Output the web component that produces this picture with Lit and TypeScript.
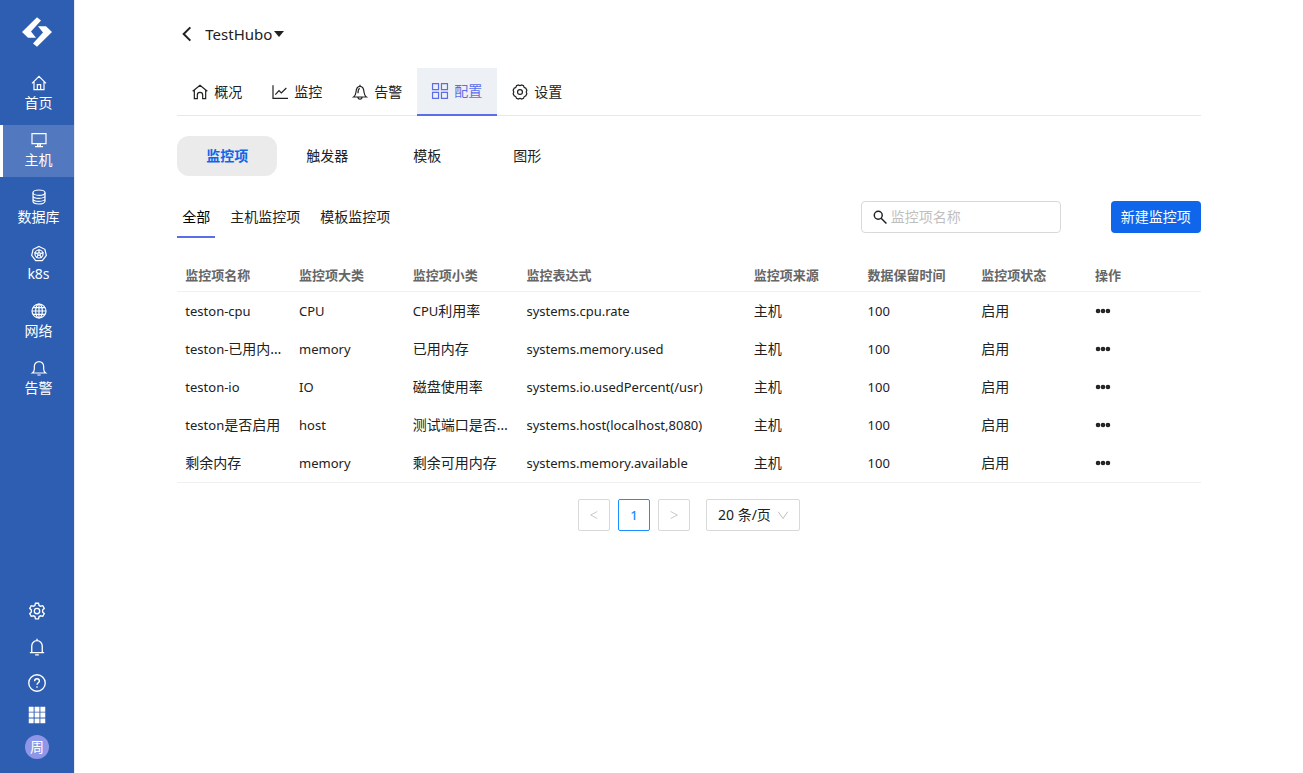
import { LitElement, html, css, svg, type TemplateResult } from "lit";
import { customElement, property, state } from "lit/decorators.js";
import { classMap } from "lit/directives/class-map.js";

const icons: Record<string, TemplateResult> = {
  home: svg`<path d="M1.500 12.500 12 2l10.500 10.500M4.500 10v12h15V10M9.500 22v-7.500h5V22"/>`,
  house: svg`<path d="M1 11 12 2l11 9M3.500 9.500V22H8v-5.500a4 4 0 0 1 8 0V22h4.500V9.500"/>`,
  screen: svg`<path d="M1.500 2.500h21v15h-21z"/><path d="M10 18h4v3h-4zM6 22h12"/>`,
  database: svg`<ellipse cx="12" cy="5.500" rx="9" ry="4"/><path d="M3 5.500v13c0 2.200 4 4 9 4s9-1.800 9-4v-13M3 10c0 2.200 4 4 9 4s9-1.800 9-4M3 14.500c0 2.200 4 4 9 4s9-1.800 9-4"/>`,
  k8s: svg`<path d="M12 .8 20.800 5l2.200 9.200-6 7.600H7l-6-7.600L3.200 5z"/><circle cx="12" cy="12" r="6"/><circle cx="12" cy="12" r="2"/><path d="M12 4.500V10M5 10l5 1.500M19 10l-5 1.500M8 18l2.800-4.500M16 18l-2.800-4.500"/>`,
  globe: svg`<circle cx="12" cy="12" r="10.500"/><ellipse cx="12" cy="12" rx="5" ry="10.500"/><path d="M12 1.500v21M1.500 12h21M3 7h18M3 17h18"/>`,
  bell: svg`<path d="M2 19.500h20c-2-1.500-3-3-3-6V9.500c0-4-3-7-7-7s-7 3-7 7v4c0 3-1 4.500-3 6zM9.500 22.500h5"/>`,
  alarm: svg`<path d="M5 19v-8.500a7 7 0 0 1 14 0V19M2.500 19.500h19M12 1v2.500M9.500 22.500h5"/>`,
  gear: svg`<path d="M10 1.600h4l.8 3 1.900 1.100 3-.8 2 3.500-2.200 2.200v2.800l2.200 2.200-2 3.500-3-.8-1.900 1.100-.8 3h-4l-.8-3-1.900-1.100-3 .8-2-3.500 2.200-2.200v-2.800L2.300 8.400l2-3.500 3 .8 1.900-1.100z"/><circle cx="12" cy="12" r="3.600"/>`,
  ring: svg`<path d="M2.500 19.500h19C19.300 18 18.500 16.500 18 12c-.4-5.500-2.500-8.500-6-8.500S6.400 6.500 6 12c-.5 4.500-1.300 6-3.500 7.500zM9 20a3 2.800 0 0 0 6 0M12 1v2.500M9 14c0-4 .6-6.500 2.500-7.500"/>`,
  chart: svg`<path d="M1.500 2v19.500H24M5 16l5.500-6 3.500 3.500L21.500 6"/>`,
  blocks: svg`<path d="M.8 .8h9v9h-9zM14.200 .8h9v9h-9zM.8 14.200h9v9h-9zM14.200 14.200h9v9h-9z"/>`,
  cog: svg`<path d="M9.700 1.500Q12 3.200 14.300 1.500L17.300 2.700Q17.700 5.600 20.600 6.200L22.300 9.300Q20.500 12 22.300 14.700L20.600 17.800Q17.700 18.400 17.300 21.300L14.300 22.500Q12 20.800 9.700 22.500L6.700 21.300Q6.300 18.400 3.400 17.800L1.700 14.700Q3.500 12 1.700 9.300L3.400 6.200Q6.300 5.600 6.700 2.700z"/><circle cx="12" cy="12" r="3.700"/>`,
  help: svg`<circle cx="12" cy="12" r="11"/><path d="M8.800 9.500c0-2 1.400-3.200 3.200-3.200s3.200 1.200 3.200 3c0 2.200-3.200 2.500-3.200 5M12 16.300v2"/>`,
  grid: svg`<path fill="currentColor" stroke="none" d="M1 1h6.500v6.500H1zM8.800 1h6.500v6.500H8.800zM16.500 1H23v6.500h-6.500zM1 8.800h6.500v6.500H1zM8.800 8.800h6.500v6.500H8.800zM16.500 8.800H23v6.500h-6.500zM1 16.500h6.500V23H1zM8.800 16.500h6.500V23H8.800zM16.500 16.500H23V23h-6.500z"/>`,
  back: svg`<path d="M17 2 7 12l10 10"/>`,
  left: svg`<path d="M20 3.500 4 12l16 8.500"/>`,
  right: svg`<path d="M4 3.500 20 12 4 20.500"/>`,
  down: svg`<path d="M2.500 5.500 12 19l9.500-13.500"/>`,
  caret: svg`<path fill="currentColor" stroke="none" d="M0 5h24L12 19z"/>`,
  search: svg`<circle cx="9" cy="9" r="6.800"/><path d="M14 14l9 9"/>`,
  more: svg`<circle cx="3.500" cy="12" r="2.200"/><circle cx="12" cy="12" r="2.200"/><circle cx="20.500" cy="12" r="2.200"/>`,
};

@customElement("ui-icon")
class UiIcon extends LitElement {
  @property() name = "";
  static styles = css`
    :host { display: inline-flex; flex: none; width: 16px; height: 16px; }
    svg { width: 100%; height: 100%; fill: none; stroke: currentColor; stroke-width: var(--stroke, 2); overflow: visible; }
  `;
  render() {
    return html`<svg viewBox="0 0 24 24" aria-hidden="true">${icons[this.name]}</svg>`;
  }
}

const navItems = [
  ["home", "首页"],
  ["screen", "主机"],
  ["database", "数据库"],
  ["k8s", "k8s"],
  ["globe", "网络"],
  ["bell", "告警"],
];

@customElement("side-nav")
class SideNav extends LitElement {
  static styles = css`
    :host { display: flex; flex-direction: column; flex: none; width: 74px; border-right: 1px solid #e8ebf2; background: #2e5eb1; color: #fff; }
    a, button { color: inherit; text-decoration: none; }
    .logo { display: flex; justify-content: center; padding: 16px 0 20px; }
    .logo svg { width: 32px; height: 32px; fill: #fff; }
    nav { display: flex; flex-direction: column; gap: 5px; }
    .item { display: flex; flex-direction: column; align-items: center; box-sizing: border-box; height: 52px; padding-top: 7px; gap: 1px; border-left: 3px solid transparent; font-size: 14px; line-height: 22px; }
    .item ui-icon { --stroke: 1.800; }
    .active { background: #5279bf; border-left-color: #fff; }
    .tools { display: flex; flex-direction: column; align-items: center; margin-top: auto; padding-bottom: 14px; }
    .tool { display: flex; align-items: center; justify-content: center; width: 36px; height: 36px; padding: 0; border: 0; background: none; }
    .tool ui-icon { width: 18px; height: 18px; --stroke: 1.800; }
    .short { height: 28px; }
    .avatar { width: 24px; height: 24px; margin-top: 6px; padding: 0; border: 0; border-radius: 50%; background: #8e96e8; font: inherit; font-size: 14px; line-height: 24px; }
  `;
  render() {
    return html`
      <a class="logo" href="#" aria-label="logo">
        <svg viewBox="0 0 32 32"><path d="M16 1.200 20 4.500 10 15.500 15 21.800H7L1 16z"/><path d="M16 30.800 12 27.500 22 16.500 17 10.200H25L31 16z"/></svg>
      </a>
      <nav>
        ${navItems.map(([icon, label], i) => html`
          <a href="#" class=${classMap({ item: true, active: i === 1 })}><ui-icon name=${icon}></ui-icon>${label}</a>`)}
      </nav>
      <div class="tools">
        <button class="tool" aria-label="gear"><ui-icon name="gear"></ui-icon></button>
        <button class="tool" aria-label="bell"><ui-icon name="alarm"></ui-icon></button>
        <button class="tool" aria-label="help"><ui-icon name="help"></ui-icon></button>
        <button class="tool short" aria-label="grid"><ui-icon name="grid"></ui-icon></button>
        <button class="avatar">周</button>
      </div>`;
  }
}

const tabs = [
  ["house", "概况"],
  ["chart", "监控"],
  ["ring", "告警"],
  ["blocks", "配置"],
  ["cog", "设置"],
];
const sections = ["监控项", "触发器", "模板", "图形"];
const scopes = ["全部", "主机监控项", "模板监控项"];
const columns = ["监控项名称", "监控项大类", "监控项小类", "监控表达式", "监控项来源", "数据保留时间", "监控项状态", "操作"];
const rows = [
  ["teston-cpu", "CPU", "CPU利用率", "systems.cpu.rate"],
  ["teston-已用内存", "memory", "已用内存", "systems.memory.used"],
  ["teston-io", "IO", "磁盘使用率", "systems.io.usedPercent(/usr)"],
  ["teston是否启用", "host", "测试端口是否可用", "systems.host(localhost,8080)"],
  ["剩余内存", "memory", "剩余可用内存", "systems.memory.available"],
].map((r) => [...r, "主机", "100", "启用"]);

/** Latin runs are set one size smaller than the Chinese text beside them. */
const mixed = (text: string) =>
  (text.match(/[\x20-\x7e]+|[^\x20-\x7e]+/g) ?? []).map((run) =>
    run.charCodeAt(0) < 127 ? html`<span class="latin">${run}</span>` : run);

@customElement("app-root")
class AppRoot extends LitElement {
  @state() private scope = 0;
  static styles = css`
    :host { display: flex; min-height: 100vh; background: #fff; color: #212121; font-family: "Noto Sans", "Noto Sans CJK SC", sans-serif; font-size: 14px; line-height: 22px; }
    a, button { color: inherit; text-decoration: none; }
    button, input, select { font: inherit; }
    main { flex: 1; min-width: 0; }
    .page { width: 83.333%; margin: 0 auto; }
    .title { display: flex; align-items: center; gap: 10px; padding-top: 22px; }
    .back { display: flex; margin-left: 2px; padding: 0; border: 0; background: none; --stroke: 3; }
    .host { display: flex; align-items: center; gap: 2px; height: 24px; padding: 0; border: 0; background: none; font-size: 15px; }
    .host ui-icon { width: 10px; height: 10px; }
    .tabs { display: flex; margin-top: 22px; border-bottom: 1px solid #e8e8e8; }
    .tab { display: flex; align-items: center; justify-content: center; gap: 6px; box-sizing: border-box; width: 80px; height: 48px; margin-bottom: -1px; }
    .tab ui-icon { --stroke: 1.800; }
    .tab.on { background: #edf0f5; border-bottom: 2px solid #5b6ee8; color: #5b6ee8; }
    .sections { display: flex; margin-top: 20px; }
    .section { width: 100px; height: 40px; padding: 0; border: 0; border-radius: 12px; background: none; }
    .section.on { background: #ebebeb; color: #0f66ea; font-weight: 700; }
    .bar { display: flex; align-items: center; margin-top: 20px; }
    .scopes { display: flex; gap: 10px; flex: 1; }
    .scope { height: 42px; padding: 2px 5px 0; border: 0; border-bottom: 2px solid transparent; background: none; white-space: nowrap; }
    .scope.on { border-color: #5b6ee8; color: #000; }
    .search { display: flex; align-items: center; gap: 4px; box-sizing: border-box; width: 200px; height: 32px; padding: 0 11px; border: 1px solid #d9d9d9; border-radius: 4px; }
    .search ui-icon { width: 14px; height: 14px; --stroke: 2.500; }
    .search input { flex: 1; min-width: 0; padding: 0; border: 0; outline: 0; background: none; }
    .search input::placeholder { color: #bfbfbf; }
    .create { width: 90px; height: 32px; margin-left: 50px; padding: 0; border: 0; border-radius: 4px; background: #0f66ea; color: #fff; }
    table { width: 100%; margin-top: 20px; border-collapse: separate; border-spacing: 0; table-layout: fixed; border-bottom: 1px solid #f0f0f0; }
    .wide { width: 22.222%; }
    th, td { box-sizing: border-box; padding: 0 8px; text-align: left; overflow: hidden; text-overflow: ellipsis; white-space: nowrap; }
    th { height: 34px; border-bottom: 1px solid #f0f0f0; color: #666; font-size: 13px; font-weight: 700; }
    td { height: 38px; }
    .latin { font-size: 13px; }
    .more { display: flex; padding: 0; border: 0; background: none; --stroke: 3.500; }
    .more ui-icon { width: 14px; height: 14px; margin: 0 1px; }
    .pager { display: flex; justify-content: center; gap: 8px; margin-top: 16px; }
    .step { display: flex; align-items: center; justify-content: center; box-sizing: border-box; width: 32px; height: 32px; padding: 0; border: 1px solid #d9d9d9; border-radius: 2px; background: #fff; color: #bfbfbf; }
    .step ui-icon { width: 10px; height: 12px; }
    .current { border-color: #1890ff; color: #1890ff; font-size: 13px; font-weight: 500; }
    .size { display: flex; align-items: center; position: relative; margin-left: 8px; color: #bfbfbf; }
    .size select { appearance: none; box-sizing: border-box; width: 94px; height: 32px; padding: 0 24px 0 11px; border: 1px solid #d9d9d9; border-radius: 2px; background: #fff; color: #212121; }
    .size ui-icon { position: absolute; right: 11px; width: 12px; height: 12px; pointer-events: none; }
  `;
  render() {
    return html`
      <side-nav></side-nav>
      <main>
        <div class="page">
          <div class="title">
            <button class="back" aria-label="back"><ui-icon name="back"></ui-icon></button>
            <button class="host">TestHubo<ui-icon name="caret"></ui-icon></button>
          </div>
          <nav class="tabs">
            ${tabs.map(([icon, label], i) => html`
              <a href="#" class=${classMap({ tab: true, on: i === 3 })}><ui-icon name=${icon}></ui-icon>${label}</a>`)}
          </nav>
          <div class="sections">
            ${sections.map((label, i) => html`<button class=${classMap({ section: true, on: i === 0 })}>${label}</button>`)}
          </div>
          <div class="bar">
            <div class="scopes">
              ${scopes.map((label, i) => html`
                <button class=${classMap({ scope: true, on: i === this.scope })} @click=${() => (this.scope = i)}>${label}</button>`)}
            </div>
            <label class="search"><ui-icon name="search"></ui-icon><input type="text" placeholder="监控项名称" aria-label="监控项名称" /></label>
            <button class="create">新建监控项</button>
          </div>
          <table>
            <colgroup>${columns.map((_, i) => html`<col class=${classMap({ wide: i === 3 })} />`)}</colgroup>
            <thead><tr>${columns.map((label) => html`<th scope="col">${label}</th>`)}</tr></thead>
            <tbody>
              ${rows.map((row) => html`
                <tr>
                  ${row.map((cell) => html`<td>${mixed(cell)}</td>`)}
                  <td><button class="more" aria-label="操作"><ui-icon name="more"></ui-icon></button></td>
                </tr>`)}
            </tbody>
          </table>
          <div class="pager">
            <button class="step" aria-label="previous" disabled><ui-icon name="left"></ui-icon></button>
            <button class="step current">1</button>
            <button class="step" aria-label="next" disabled><ui-icon name="right"></ui-icon></button>
            <label class="size">
              <select aria-label="20 条/页"><option>20 条/页</option></select>
              <ui-icon name="down"></ui-icon>
            </label>
          </div>
        </div>
      </main>`;
  }
}
